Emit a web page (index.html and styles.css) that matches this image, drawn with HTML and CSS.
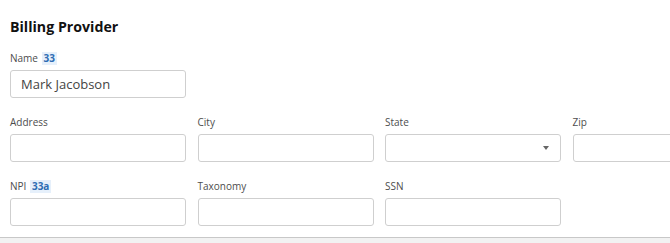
FILE: index.html
```html
<html>

<head>
    <title>Billing Provider</title>
    <link rel="stylesheet" href="styles.css">
</head>

<body>
    <div class="panel">
        <h2 class="panelTitle">Billing Provider</h2>

        <div class="formRow">
            <div class="field">
                <label class="fieldLabel">Name <span class="boxTag">33</span></label>
                <input type="text" class="textBox" value="Mark Jacobson" />
            </div>
        </div>

        <div class="formRow">
            <div class="field">
                <label class="fieldLabel">Address</label>
                <input type="text" class="textBox" />
            </div>
            <div class="field">
                <label class="fieldLabel">City</label>
                <input type="text" class="textBox" />
            </div>
            <div class="field">
                <label class="fieldLabel">State</label>
                <div class="selectBox"><span class="caret"></span></div>
            </div>
            <div class="field">
                <label class="fieldLabel">Zip</label>
                <input type="text" class="textBox" />
            </div>
        </div>

        <div class="formRow">
            <div class="field">
                <label class="fieldLabel">NPI <span class="boxTag">33a</span></label>
                <input type="text" class="textBox" />
            </div>
            <div class="field">
                <label class="fieldLabel">Taxonomy</label>
                <input type="text" class="textBox" />
            </div>
            <div class="field">
                <label class="fieldLabel">SSN</label>
                <input type="text" class="textBox" />
            </div>
        </div>
    </div>
    <div class="pageFooter"></div>
</body>

</html>
```

FILE: styles.css
```css
html, body {
    margin: 0px;
    padding: 0px;
    overflow: hidden;
    background-color: #f2f2f2;
    font-family: "Open Sans", sans-serif;
}

.panel {
    background-color: #ffffff;
    padding: 15px 10px 11px 10px;
    border-bottom: 1px solid #c8c8c8;
    width: 780px;
}

.panelTitle {
    margin: 0px 0px 12px 0px;
    font-size: 14.2px;
    line-height: 24px;
    font-weight: bold;
    color: #111111;
}

.formRow {
    display: grid;
    grid-template-columns: repeat(4, 176px);
    column-gap: 11.5px;
    margin-bottom: 17px;
}

.formRow:last-child {
    margin-bottom: 0px;
}

.field {
    display: flex;
    flex-direction: column;
}

.fieldLabel {
    font-size: 10px;
    line-height: 15px;
    height: 15px;
    margin-bottom: 4px;
    color: #4d4d4d;
}

.boxTag {
    display: inline-block;
    padding: 0px 2px;
    margin-left: 1px;
    font-size: 10px;
    line-height: 13px;
    font-weight: bold;
    color: #2d6cb3;
    background-color: #e6f0fb;
}

.textBox {
    box-sizing: border-box;
    width: 176px;
    height: 28px;
    margin: 0px;
    padding: 0px 10px;
    border: 1px solid #cfcfcf;
    border-radius: 3px;
    font-family: "Open Sans", sans-serif;
    font-size: 13px;
    color: #444444;
    outline: none;
}

.selectBox {
    box-sizing: border-box;
    width: 176px;
    height: 28px;
    border: 1px solid #cfcfcf;
    border-radius: 3px;
    display: flex;
    align-items: center;
    justify-content: flex-end;
    padding-right: 11px;
}

.caret {
    width: 0px;
    height: 0px;
    border-left: 3.5px solid transparent;
    border-right: 3.5px solid transparent;
    border-top: 4px solid #666666;
}

.pageFooter {
    height: 20px;
}
```
